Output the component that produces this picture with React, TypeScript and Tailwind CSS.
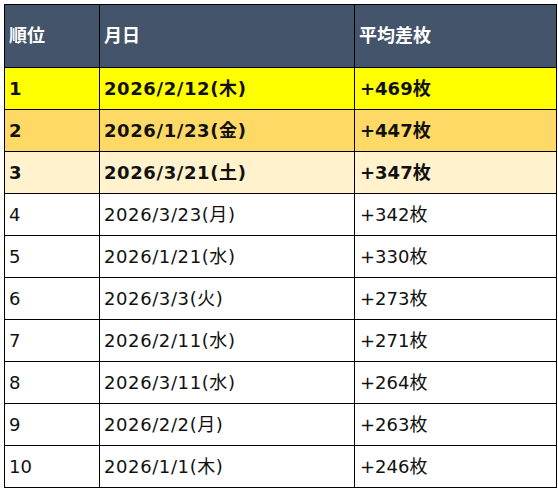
const rows = [
  { rank: "1", date: "2026/2/12(木)", diff: "+469枚", bg: "bg-[#ffff00]", bold: true },
  { rank: "2", date: "2026/1/23(金)", diff: "+447枚", bg: "bg-[#ffd966]", bold: true },
  { rank: "3", date: "2026/3/21(土)", diff: "+347枚", bg: "bg-[#fff2cc]", bold: true },
  { rank: "4", date: "2026/3/23(月)", diff: "+342枚", bg: "bg-white", bold: false },
  { rank: "5", date: "2026/1/21(水)", diff: "+330枚", bg: "bg-white", bold: false },
  { rank: "6", date: "2026/3/3(火)", diff: "+273枚", bg: "bg-white", bold: false },
  { rank: "7", date: "2026/2/11(水)", diff: "+271枚", bg: "bg-white", bold: false },
  { rank: "8", date: "2026/3/11(水)", diff: "+264枚", bg: "bg-white", bold: false },
  { rank: "9", date: "2026/2/2(月)", diff: "+263枚", bg: "bg-white", bold: false },
  { rank: "10", date: "2026/1/1(木)", diff: "+246枚", bg: "bg-white", bold: false },
];

export default function App() {
  return (
    <div className="w-[558px] h-[490px] bg-white pl-[4px] pt-[4px] font-['DejaVu_Sans','Noto_Sans_CJK_JP',sans-serif] text-[18px] text-[#111]">
      <table className="border-collapse w-[552px] table-fixed">
        <colgroup>
          <col className="w-[95px]" />
          <col className="w-[255px]" />
          <col className="w-[202px]" />
        </colgroup>
        <thead>
          <tr className="h-[63px] bg-[#44546a] text-white font-bold">
            <th className="border border-black text-left px-[4px] pb-[2px]">順位</th>
            <th className="border border-black text-left px-[4px] pb-[2px]">月日</th>
            <th className="border border-black text-left px-[4px] pb-[2px]">平均差枚</th>
          </tr>
        </thead>
        <tbody>
          {rows.map((r) => (
            <tr key={r.rank} className={`h-[42px] ${r.bg} ${r.bold ? "font-bold" : ""}`}>
              <td className="border border-black px-[4px]">{r.rank}</td>
              <td className="border border-black px-[4px] tracking-[0.6px]">{r.date}</td>
              <td className="border border-black px-[5px]">{r.diff}</td>
            </tr>
          ))}
        </tbody>
      </table>
    </div>
  );
}
